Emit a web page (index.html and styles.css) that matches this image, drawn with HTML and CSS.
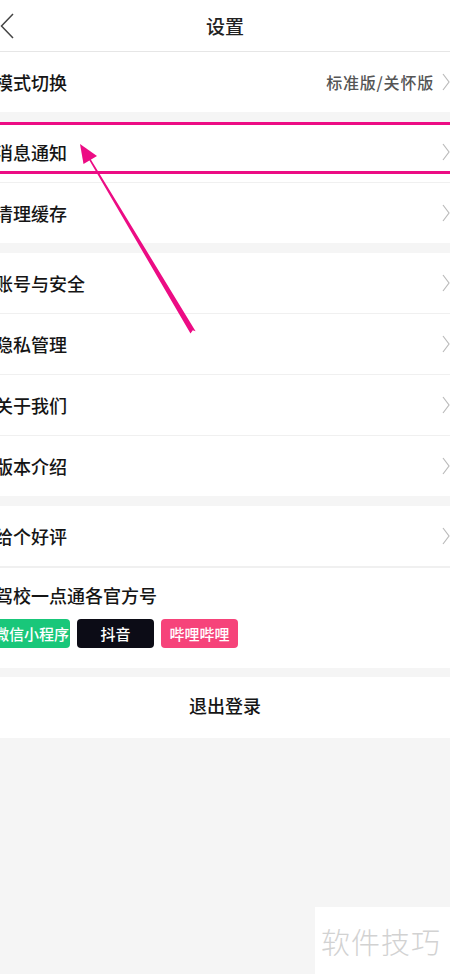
FILE: index.html
```html
<!DOCTYPE html>
<html lang="zh">
<head>
<meta charset="utf-8">
<title>设置</title>
<link rel="stylesheet" href="styles.css">
</head>
<body>
<div class="page">
  <header class="header">
    <svg class="back" width="14" height="26" viewBox="0 0 14 26"><path d="M13 1 L1.5 13 L13 25" fill="none" stroke="#444" stroke-width="1.5"/></svg>
    <h1 class="title">设置</h1>
  </header>

  <section class="group">
    <div class="row">
      <span class="label">模式切换</span>
      <span class="value">标准版/关怀版</span>
      <svg class="chev" width="8" height="18" viewBox="0 0 8 18"><path d="M1 1 L7 9 L1 17" fill="none" stroke="#bbb" stroke-width="1.2"/></svg>
    </div>
  </section>

  <section class="group">
    <div class="row">
      <span class="label">消息通知</span>
      <svg class="chev" width="8" height="18" viewBox="0 0 8 18"><path d="M1 1 L7 9 L1 17" fill="none" stroke="#bbb" stroke-width="1.2"/></svg>
    </div>
    <div class="row">
      <span class="label">清理缓存</span>
      <svg class="chev" width="8" height="18" viewBox="0 0 8 18"><path d="M1 1 L7 9 L1 17" fill="none" stroke="#bbb" stroke-width="1.2"/></svg>
    </div>
  </section>

  <section class="group">
    <div class="row">
      <span class="label">账号与安全</span>
      <svg class="chev" width="8" height="18" viewBox="0 0 8 18"><path d="M1 1 L7 9 L1 17" fill="none" stroke="#bbb" stroke-width="1.2"/></svg>
    </div>
    <div class="row">
      <span class="label">隐私管理</span>
      <svg class="chev" width="8" height="18" viewBox="0 0 8 18"><path d="M1 1 L7 9 L1 17" fill="none" stroke="#bbb" stroke-width="1.2"/></svg>
    </div>
    <div class="row">
      <span class="label">关于我们</span>
      <svg class="chev" width="8" height="18" viewBox="0 0 8 18"><path d="M1 1 L7 9 L1 17" fill="none" stroke="#bbb" stroke-width="1.2"/></svg>
    </div>
    <div class="row">
      <span class="label">版本介绍</span>
      <svg class="chev" width="8" height="18" viewBox="0 0 8 18"><path d="M1 1 L7 9 L1 17" fill="none" stroke="#bbb" stroke-width="1.2"/></svg>
    </div>
  </section>

  <section class="group">
    <div class="row">
      <span class="label">给个好评</span>
      <svg class="chev" width="8" height="18" viewBox="0 0 8 18"><path d="M1 1 L7 9 L1 17" fill="none" stroke="#bbb" stroke-width="1.2"/></svg>
    </div>
    <div class="official">
      <div class="label">驾校一点通各官方号</div>
      <div class="tags">
        <span class="tag tag-wx">微信小程序</span>
        <span class="tag tag-dy">抖音</span>
        <span class="tag tag-bl">哔哩哔哩</span>
      </div>
    </div>
  </section>

  <section class="logout">
    <span class="logout-text">退出登录</span>
  </section>

  <div class="mark-line mark-top"></div>
  <div class="mark-line mark-bottom"></div>
  <svg class="arrow" width="450" height="974" viewBox="0 0 450 974">
    <polygon points="80,144 97,156 83.5,164" fill="#ec0c84"/>
    <polygon points="88.4,155.4 87.0,156.2 190.5,333.5 192.8,330.2 195.6,331.2" fill="#ec0c84"/>
  </svg>

  <div class="watermark">软件技巧</div>
</div>
</body>
</html>
```
FILE: styles.css
```css
* { box-sizing: border-box; }
html, body {
  margin: 0;
  padding: 0;
}
body {
  background: #f5f5f5;
  font-family: "Noto Sans CJK SC", "Noto Sans", sans-serif;
  color: #151515;
}
.page {
  position: relative;
  width: 450px;
  min-height: 974px;
  overflow: hidden;
}
.header {
  height: 52px;
  background: #fff;
  border-bottom: 1px solid #e6e6e6;
  display: flex;
  align-items: center;
  justify-content: center;
  position: relative;
}
.back {
  position: absolute;
  left: 0;
  top: 13px;
}
.title {
  margin: 0;
  font-size: 19px;
  font-weight: 500;
  color: #222;
}
.group {
  background: #fff;
  margin-bottom: 10px;
}
.row {
  box-sizing: content-box;
  height: 60px;
  display: flex;
  align-items: center;
  border-bottom: 1px solid #f0f0f0;
}
.row:last-child { border-bottom: none; }
.label {
  margin-left: -5px;
  font-size: 18px;
  font-weight: 500;
  color: #151515;
  flex: 1;
}
.value {
  font-size: 16px;
  font-weight: 500;
  letter-spacing: 0.8px;
  color: #555;
  margin-right: 8px;
}
.chev { flex: none; }
.official {
  height: 101px;
  padding-top: 15px;
  border-top: 1px solid #f0f0f0;
}
.official .label { line-height: 24px; }
.tags {
  display: flex;
  gap: 7px;
  margin-top: 12px;
  margin-left: -7px;
}
.tag {
  width: 77px;
  height: 29px;
  border-radius: 4px;
  display: flex;
  align-items: center;
  justify-content: center;
  color: #fff;
  font-size: 15px;
  font-weight: 500;
}
.tag-wx { background: #19c77a; }
.tag-dy { background: #0c0c16; }
.tag-bl { background: #f6437a; }
.logout {
  background: #fff;
  height: 61px;
  margin-top: -1px;
  padding-bottom: 5px;
  display: flex;
  align-items: center;
  justify-content: center;
}
.logout-text {
  font-size: 18px;
  font-weight: 500;
  color: #151515;
}
.mark-line {
  position: absolute;
  left: 0;
  width: 450px;
  height: 3px;
  background: #ec0c84;
}
.mark-top { top: 122px; }
.mark-bottom { top: 171px; }
.arrow {
  position: absolute;
  left: 0;
  top: 0;
  pointer-events: none;
}
.watermark {
  position: absolute;
  left: 315px;
  top: 907px;
  width: 135px;
  height: 67px;
  background: #fff;
  color: #d2d2d2;
  font-size: 29px;
  font-weight: 300;
  display: flex;
  align-items: center;
  padding-left: 6px;
  letter-spacing: 1px;
}
```
